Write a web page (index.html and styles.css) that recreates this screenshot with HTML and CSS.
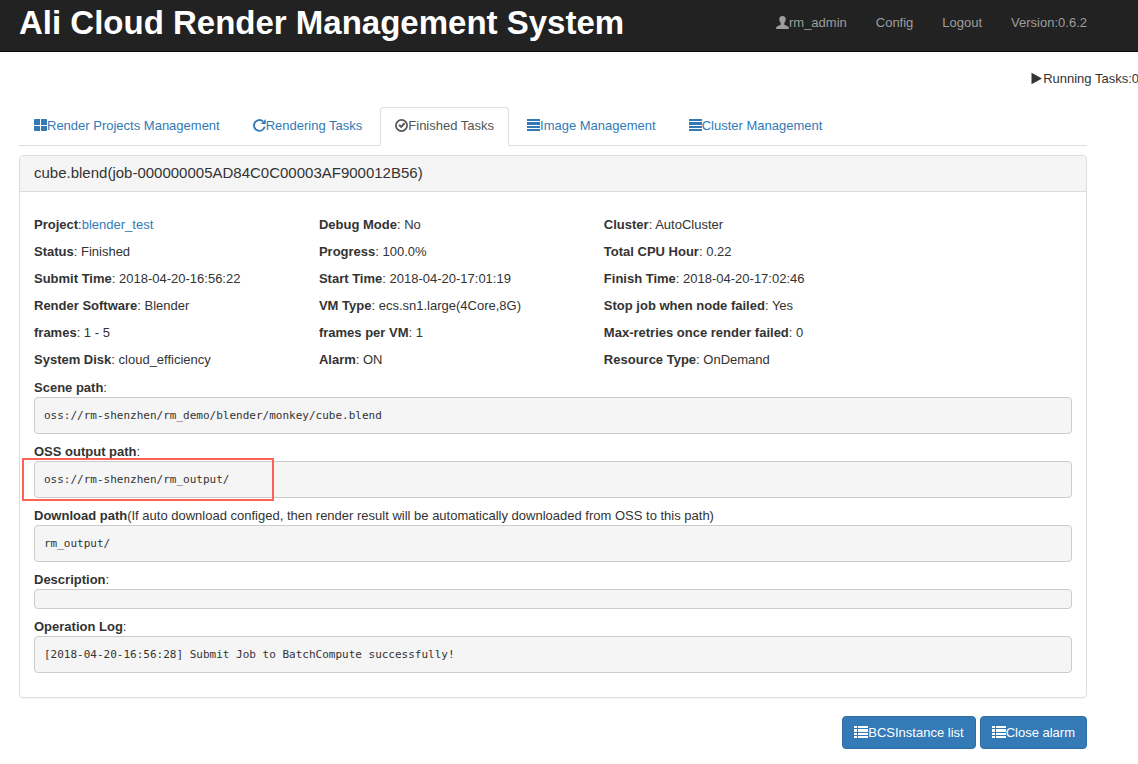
FILE: index.html
```html
<!DOCTYPE html>
<html lang="en">
<head>
<meta charset="utf-8">
<title>Ali Cloud Render Management System</title>
<link rel="stylesheet" href="styles.css">
</head>
<body>
<svg class="sprite" aria-hidden="true">
  <symbol id="user" viewBox="0 0 14 14"><path d="M7 0C4.500 0 3.400 1.500 3.500 3.500C3.600 5.200 4.200 6.500 5 7.400V9.300L1.300 11Q.1 11.600 0 14H14Q13.900 11.600 12.700 11L9 9.300V7.400C9.800 6.500 10.400 5.200 10.500 3.500C10.600 1.500 9.500 0 7 0Z"/></symbol>
  <symbol id="play" viewBox="0 0 13 13"><path d="M1.500 .8V12.200L12 6.500Z"/></symbol>
  <symbol id="tiles" viewBox="0 0 13 13"><path d="M1 0H6V6H0V1Q0 0 1 0ZM7 0H12Q13 0 13 1V6H7ZM0 7H6V12H1Q0 12 0 11ZM7 7H13V11Q13 12 12 12H7Z"/></symbol>
  <symbol id="refresh" viewBox="0 0 13 13"><path d="M11.700 7.600A5.400 5.400 0 1 1 10 2.400" fill="none" stroke="currentColor" stroke-width="1.900"/><path d="M7.800 4.900H12.700V0Z"/></symbol>
  <symbol id="check" viewBox="0 0 13 13"><circle cx="6.500" cy="6.500" r="5.600" fill="none" stroke="currentColor" stroke-width="1.700"/><path d="M3.300 6.600L4.900 5.200L6.100 6.400L8.900 3.500L10.300 4.900L6.200 9.300Z"/></symbol>
  <symbol id="lines" viewBox="0 0 13 13"><path d="M0 0H13V2H0ZM0 3H13V6H0ZM0 7H13V9H0ZM0 10H13V12H0Z"/></symbol>
  <symbol id="list" viewBox="0 0 14 13"><path d="M0 0H3V2H0ZM4 0H14V2H4ZM0 3H3V6H0ZM4 3H14V6H4ZM0 7H3V9H0ZM4 7H14V9H4ZM0 10H3V12H0ZM4 10H14V12H4Z"/></symbol>
</svg>

<header class="navbar">
  <h1 class="brand">Ali Cloud Render Management System</h1>
  <nav class="nav-links">
    <a href="#"><svg class="icon"><use href="#user"/></svg>rm_admin</a>
    <a href="#">Config</a>
    <a href="#">Logout</a>
    <a href="#">Version:0.6.2</a>
  </nav>
</header>

<div class="running"><svg class="icon"><use href="#play"/></svg>Running Tasks:0</div>

<main class="content">
  <nav class="tabs">
    <a class="tab" href="#"><svg class="icon"><use href="#tiles"/></svg>Render Projects Management</a>
    <a class="tab" href="#"><svg class="icon"><use href="#refresh"/></svg>Rendering Tasks</a>
    <a class="tab active" href="#" aria-current="page"><svg class="icon"><use href="#check"/></svg>Finished Tasks</a>
    <a class="tab" href="#"><svg class="icon"><use href="#lines"/></svg>Image Management</a>
    <a class="tab" href="#"><svg class="icon"><use href="#lines"/></svg>Cluster Management</a>
  </nav>

  <section class="panel">
    <h2 class="panel-heading">cube.blend(job-000000005AD84C0C00003AF900012B56)</h2>
    <div class="panel-body">
      <div class="details">
        <div><b>Project</b>:<a href="#">blender_test</a></div>
        <div><b>Debug Mode</b>: No</div>
        <div><b>Cluster</b>: AutoCluster</div>
        <div><b>Status</b>: Finished</div>
        <div><b>Progress</b>: 100.0%</div>
        <div><b>Total CPU Hour</b>: 0.22</div>
        <div><b>Submit Time</b>: 2018-04-20-16:56:22</div>
        <div><b>Start Time</b>: 2018-04-20-17:01:19</div>
        <div><b>Finish Time</b>: 2018-04-20-17:02:46</div>
        <div><b>Render Software</b>: Blender</div>
        <div><b>VM Type</b>: ecs.sn1.large(4Core,8G)</div>
        <div><b>Stop job when node failed</b>: Yes</div>
        <div><b>frames</b>: 1 - 5</div>
        <div><b>frames per VM</b>: 1</div>
        <div><b>Max-retries once render failed</b>: 0</div>
        <div><b>System Disk</b>: cloud_efficiency</div>
        <div><b>Alarm</b>: ON</div>
        <div><b>Resource Type</b>: OnDemand</div>
      </div>
      <div class="field">
        <div><b>Scene path</b>:</div>
        <pre>oss://rm-shenzhen/rm_demo/blender/monkey/cube.blend</pre>
      </div>
      <div class="field">
        <div><b>OSS output path</b>:</div>
        <pre>oss://rm-shenzhen/rm_output/</pre>
        <div class="highlight"></div>
      </div>
      <div class="field">
        <div><b>Download path</b>(If auto download configed, then render result will be automatically downloaded from OSS to this path)</div>
        <pre>rm_output/</pre>
      </div>
      <div class="field">
        <div><b>Description</b>:</div>
        <pre></pre>
      </div>
      <div class="field">
        <div><b>Operation Log</b>:</div>
        <pre>[2018-04-20-16:56:28] Submit Job to BatchCompute successfully!</pre>
      </div>
    </div>
  </section>

  <div class="actions">
    <button class="btn" type="button"><svg class="icon"><use href="#list"/></svg>BCSInstance list</button>
    <button class="btn" type="button"><svg class="icon"><use href="#list"/></svg>Close alarm</button>
  </div>
</main>
</body>
</html>
```
FILE: styles.css
```css
* {
  box-sizing: border-box;
}

body {
  margin: 0;
  overflow-x: hidden;
  background: #fff;
  color: #333;
  font: 13px/19px "Liberation Sans", Arial, sans-serif;
}

a {
  color: #337ab7;
  text-decoration: none;
}

.sprite {
  display: none;
}

.icon {
  flex: none;
  width: 13px;
  height: 13px;
  fill: currentColor;
}

.navbar {
  display: flex;
  justify-content: space-between;
  align-items: flex-start;
  padding: 3px 51px 8px 19px;
  background: #222;
  border-bottom: 1px solid #080808;
}

.brand {
  margin: 0;
  color: #fff;
  font-size: 33px;
  line-height: 40px;
}

.nav-links {
  display: flex;
  gap: 29px;
  padding-top: 10px;
}

.nav-links a {
  display: flex;
  align-items: center;
  color: #9d9d9d;
}

.running {
  display: flex;
  justify-content: flex-end;
  align-items: center;
  margin: 17px -1px 19px 0;
  white-space: nowrap;
}

.content {
  padding: 0 51px 16px 19px;
}

.tabs {
  display: flex;
  gap: 3px;
  border-bottom: 1px solid #ddd;
}

.tab {
  display: flex;
  align-items: center;
  margin-bottom: -1px;
  padding: 8px 14px 10px;
  border: 1px solid transparent;
  border-radius: 4px 4px 0 0;
}

.tab.active {
  color: #555;
  background: #fff;
  border-color: #ddd #ddd #fff;
}

.panel {
  margin-top: 9px;
  border: 1px solid #ddd;
  border-radius: 4px;
  box-shadow: 0 1px 1px rgba(0, 0, 0, .05);
}

.panel-heading {
  margin: 0;
  padding: 7px 14px 9px;
  background: #f5f5f5;
  border-bottom: 1px solid #ddd;
  border-radius: 3px 3px 0 0;
  font-size: 15px;
  font-weight: normal;
}

.panel-body {
  display: grid;
  gap: 8px;
  padding: 23px 14px 24px;
}

.details {
  display: grid;
  grid-template-columns: 27.45% 27.45% 1fr;
  row-gap: 8px;
  padding-bottom: 1px;
}

.field {
  position: relative;
}

pre {
  margin: 0;
  padding: 9px;
  overflow: auto;
  background: #f5f5f5;
  border: 1px solid #ccc;
  border-radius: 4px;
  font: 11px/17px "DejaVu Sans Mono", monospace;
}

.highlight {
  position: absolute;
  top: 16px;
  left: -12px;
  width: 252px;
  height: 43px;
  border: 2px solid #fa6454;
}

.actions {
  display: flex;
  justify-content: flex-end;
  gap: 4px;
  margin-top: 18px;
}

.btn {
  display: flex;
  align-items: center;
  padding: 6px 11px;
  background: #337ab7;
  border: 1px solid #2e6da4;
  border-radius: 4px;
  color: #fff;
  font: inherit;
}

.btn .icon {
  width: 14px;
}
```
